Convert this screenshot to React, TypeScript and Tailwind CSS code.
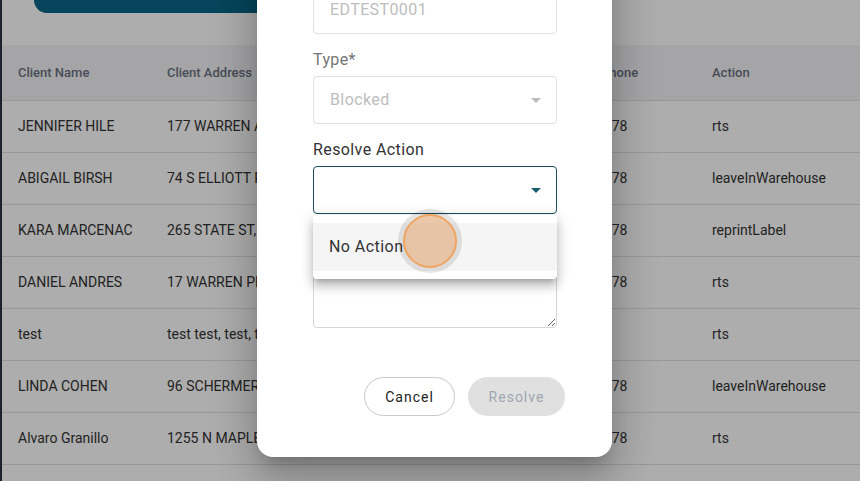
import React, { ReactElement } from "react";

type Row = {
  name: string;
  address: string;
  type: string;
  phone: string;
  action: string;
};

const ROWS: Row[] = [
  { name: "JENNIFER HILE", address: "177 WARREN AVE, BOSTON", type: "Blocked", phone: "555-555-1278", action: "rts" },
  { name: "ABIGAIL BIRSH", address: "74 S ELLIOTT PL, BROOKLYN", type: "Blocked", phone: "555-555-4478", action: "leaveInWarehouse" },
  { name: "KARA MARCENAC", address: "265 STATE ST, ALBANY", type: "Blocked", phone: "555-555-2378", action: "reprintLabel" },
  { name: "DANIEL ANDRES", address: "17 WARREN PL, NEWARK", type: "Blocked", phone: "555-555-9178", action: "rts" },
  { name: "test", address: "test test, test, test", type: "Blocked", phone: "555-1234", action: "rts" },
  { name: "LINDA COHEN", address: "96 SCHERMERHORN ST", type: "Blocked", phone: "555-555-6078", action: "leaveInWarehouse" },
  { name: "Alvaro Granillo", address: "1255 N MAPLE AVE", type: "Blocked", phone: "555-555-3378", action: "rts" },
  { name: "MARK STEVENS", address: "40 OAK ST, DENVER", type: "Blocked", phone: "555-555-8878", action: "rts" },
];

const COLS = "grid grid-cols-[149px_200px_174px_171px_1fr]";

function Caret({ className }: { className: string }): ReactElement {
  return (
    <svg viewBox="0 0 24 24" className={`h-6 w-6 ${className}`} fill="currentColor">
      <path d="M7 10l5 5 5-5z" />
    </svg>
  );
}

function ExceptionTable(): ReactElement {
  return (
    <div className="flex h-full w-full">
      <div className="h-full w-[2px] bg-[#2b3145]" />
      <div className="flex-1 bg-white">
        <div className="h-[45px]">
          <div className="ml-[32px] h-[13px] w-[380px] rounded-b-[13px] bg-[#0a6686]" />
        </div>
        <div className={`${COLS} h-[56px] items-center border-b border-[#e0e0e0] bg-gray-100 text-[13px] font-medium text-gray-500`}>
          <div className="px-4">Client Name</div>
          <div className="px-4">Client Address</div>
          <div className="px-4">Type</div>
          <div className="px-4">Customer Phone</div>
          <div className="px-4">Action</div>
        </div>
        {ROWS.map((row) => (
          <div
            key={row.name}
            className={`${COLS} h-[52px] items-center border-b border-[#e0e0e0] pb-px text-sm text-[#333]`}
          >
            <div className="px-4">{row.name}</div>
            <div className="whitespace-nowrap px-4">{row.address}</div>
            <div className="px-4">{row.type}</div>
            <div className="px-4">{row.phone}</div>
            <div className="px-4">{row.action}</div>
          </div>
        ))}
      </div>
    </div>
  );
}

function ResolveDialog(): ReactElement {
  return (
    <div className="absolute bottom-[24px] left-[257px] w-[355px] rounded-2xl bg-white pb-[41px] pl-[56px] pr-[55px] pt-6 shadow-[0_11px_15px_-7px_rgba(0,0,0,0.2),0_24px_38px_3px_rgba(0,0,0,0.14),0_9px_46px_8px_rgba(0,0,0,0.12)]">
      <h2 className="mb-6 text-xl font-medium text-[#222]">Resolve Exception</h2>

      <label className="mb-1 block h-6 text-base leading-6 tracking-[0.4px] text-[#757575]">Tracking Number*</label>
      <div className="flex h-[48px] items-center rounded border border-[#e0e0e0] px-4 text-base tracking-[0.4px] text-[#bdbdbd]">
        EDTEST0001
      </div>

      <label className="mb-1 mt-[14px] block h-6 text-base leading-6 tracking-[0.4px] text-[#757575]">Type*</label>
      <div className="flex h-[48px] items-center justify-between rounded border border-[#e0e0e0] pl-4 pr-2 text-base tracking-[0.4px] text-[#bdbdbd]">
        <span>Blocked</span>
        <Caret className="text-[#bdbdbd]" />
      </div>

      <label className="mb-1 mt-[14px] block h-6 text-base leading-6 tracking-[0.4px] text-[#333]">
        Resolve Action
      </label>
      <div className="relative z-10">
        <div className="flex h-[48px] items-center justify-end rounded border border-[#1b4e60] pl-4 pr-2">
          <Caret className="text-[#1d5b70]" />
        </div>
        <div className="absolute left-0 right-0 top-[49px] rounded bg-white py-2 shadow-[0_5px_5px_-3px_rgba(0,0,0,0.2),0_8px_10px_1px_rgba(0,0,0,0.14),0_3px_14px_2px_rgba(0,0,0,0.12)]">
          <div className="flex h-[48px] items-center bg-[#f5f5f5] px-4 text-base tracking-[0.45px] text-[#333]">
            No Action
          </div>
        </div>
      </div>

      <label className="mb-1 mt-[14px] block h-6 text-base leading-6 tracking-[0.4px] text-[#333]">Description</label>
      <textarea className="block h-[72px] w-full rounded border border-[#d3d6dc] px-4 py-3 text-base outline-none" />

      <div className="-mr-2 mt-[49px] flex justify-end gap-[13px]">
        <button className="h-[39px] w-[91px] rounded-full border border-[#c8c8c8] bg-white text-sm tracking-[1px] text-[#222]">
          Cancel
        </button>
        <button className="h-[39px] w-[97px] rounded-full bg-[#e0e0e0] text-sm tracking-[1px] text-[#9ea7b3]">
          Resolve
        </button>
      </div>
    </div>
  );
}

export default function App(): ReactElement {
  return (
    <div className="relative h-[481px] w-[860px] overflow-hidden font-['Roboto',sans-serif]">
      <ExceptionTable />
      <div className="absolute inset-0 bg-black/[0.32]" />
      <ResolveDialog />
      {/* click indicator */}
      <div className="absolute left-[398px] top-[209px] z-20 h-[64px] w-[64px] rounded-full bg-black/10" />
      <div className="absolute left-[403px] top-[214px] z-20 h-[54px] w-[54px] rounded-full border-2 border-[#f0a462] bg-[#f0b07a]/55" />
    </div>
  );
}
